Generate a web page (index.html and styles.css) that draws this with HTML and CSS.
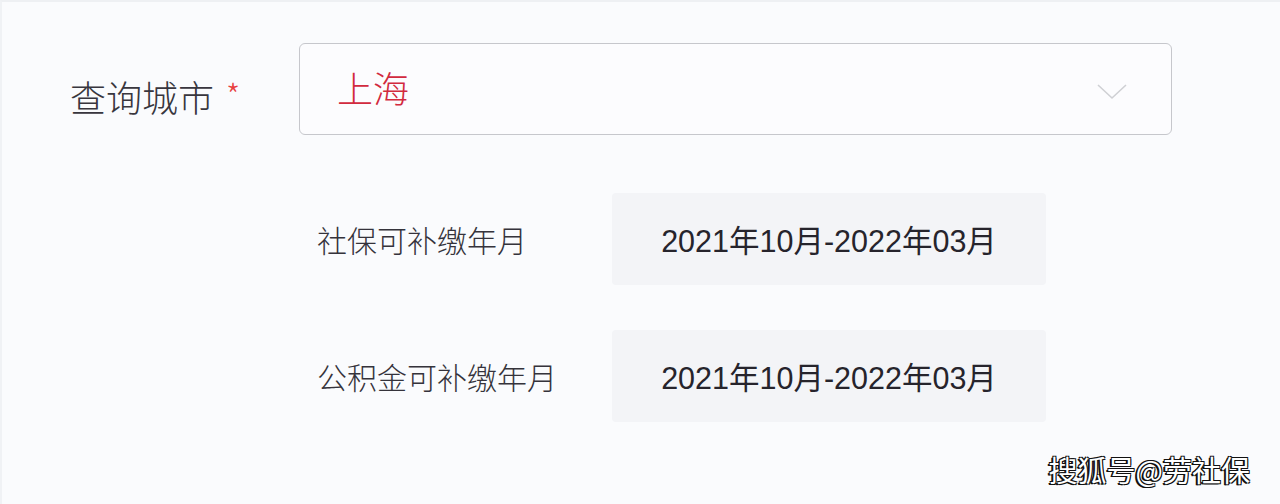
FILE: index.html
```html
<!DOCTYPE html>
<html>
  <head>
    <title>查询城市</title>
    <link rel="stylesheet" href="styles.css">
  </head>
  <body>
    <div class="page">
      <div class="city-row">
        <label class="city-label">查询城市 <span class="required">*</span></label>
        <div class="city-select">
          <span class="city-value">上海</span>
          <svg class="chevron" width="30" height="16" viewBox="0 0 30 16">
            <polyline points="1,1 15,14 29,1" fill="none" stroke="#cfd0d4" stroke-width="1.6"/>
          </svg>
        </div>
      </div>

      <div class="info-row first">
        <span class="info-label">社保可补缴年月</span>
        <div class="info-value">2021年10月-2022年03月</div>
      </div>

      <div class="info-row">
        <span class="info-label">公积金可补缴年月</span>
        <div class="info-value">2021年10月-2022年03月</div>
      </div>

      <div class="watermark">搜狐号@劳社保</div>
    </div>
  </body>
</html>
```

FILE: styles.css
```css
body {
  margin: 0;
  padding: 0;
  background-color: #fafbfd;
  font-family: "Noto Sans CJK SC", "Noto Sans", sans-serif;
  overflow: hidden;
}

.page {
  position: relative;
  height: 504px;
  box-sizing: border-box;
  padding-top: 43px;
  border-top: 2px solid #eef0f3;
  border-left: 2px solid #f0f2f5;
}

.city-row {
  display: flex;
  align-items: center;
  padding-left: 68px;
}

.city-label {
  width: 229px;
  font-size: 36px;
  font-weight: 300;
  color: #38363e;
  padding-top: 12px;
  line-height: 1;
}

.required {
  color: #e8403e;
  font-size: 32px;
  margin-left: 4px;
  position: relative;
  top: -4px;
}

.city-select {
  width: 873px;
  height: 92px;
  box-sizing: border-box;
  border: 1px solid #c6c7cc;
  border-radius: 6px;
  background-color: #fcfcfe;
  display: flex;
  align-items: center;
  justify-content: space-between;
  padding: 0 44px 0 37px;
  margin-top: -2px;
}

.city-value {
  font-size: 36px;
  font-weight: 300;
  color: #d22a3e;
  line-height: 1;
  margin-top: -4px;
}

.chevron {
  margin-top: 6px;
}

.info-row {
  display: flex;
  align-items: center;
  padding-left: 315px;
  margin-top: 45px;
}

.info-row.first {
  margin-top: 58px;
}

.info-label {
  width: 295px;
  font-size: 30px;
  font-weight: 300;
  color: #35333b;
  line-height: 1;
}

.info-value {
  width: 434px;
  height: 92px;
  border-radius: 4px;
  background-color: #f3f4f7;
  display: flex;
  align-items: center;
  justify-content: center;
  font-family: "Liberation Sans", "Noto Sans CJK SC", sans-serif;
  font-size: 30.5px;
  color: #26242c;
}

.watermark {
  position: absolute;
  right: 30px;
  bottom: 14px;
  font-size: 29px;
  color: #ffffff;
  text-shadow: -1px -1px 0 #111, 1px -1px 0 #111, -1px 1px 0 #111, 1px 1px 0 #111, -2px 1px 0 #111;
}
```
